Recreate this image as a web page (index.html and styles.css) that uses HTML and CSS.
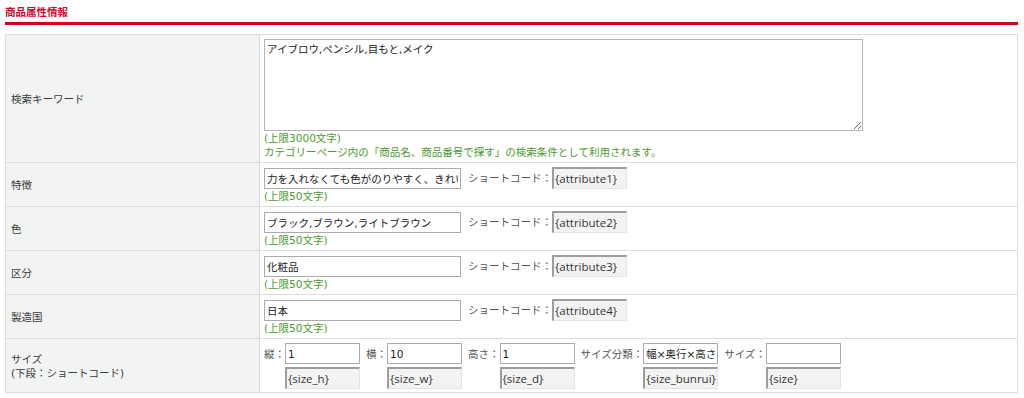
FILE: index.html
```html
<!DOCTYPE html>
<html lang="ja">
<head>
    <meta charset="UTF-8">
    <title>商品属性情報</title>
    <link rel="stylesheet" href="styles.css">
</head>
<body>
    <div class="wrap">
        <h2 class="sec-title">商品属性情報</h2>
        <table class="attr-table">
            <tr>
                <th>検索キーワード</th>
                <td>
                    <textarea class="kw">アイブロウ,ペンシル,目もと,メイク</textarea>
                    <div class="hint">(上限3000文字)</div>
                    <div class="hint">カテゴリーページ内の「商品名、商品番号で探す」の検索条件として利用されます。</div>
                </td>
            </tr>
            <tr>
                <th>特徴</th>
                <td>
                    <div class="line">
                        <input class="txt" type="text" value="力を入れなくても色がのりやすく、きれいに描けます">
                        <span class="sc-label">ショートコード：</span><input class="code" type="text" value="{attribute1}" readonly>
                    </div>
                    <div class="hint">(上限50文字)</div>
                </td>
            </tr>
            <tr>
                <th>色</th>
                <td>
                    <div class="line">
                        <input class="txt" type="text" value="ブラック,ブラウン,ライトブラウン">
                        <span class="sc-label">ショートコード：</span><input class="code" type="text" value="{attribute2}" readonly>
                    </div>
                    <div class="hint">(上限50文字)</div>
                </td>
            </tr>
            <tr>
                <th>区分</th>
                <td>
                    <div class="line">
                        <input class="txt" type="text" value="化粧品">
                        <span class="sc-label">ショートコード：</span><input class="code" type="text" value="{attribute3}" readonly>
                    </div>
                    <div class="hint">(上限50文字)</div>
                </td>
            </tr>
            <tr>
                <th>製造国</th>
                <td>
                    <div class="line">
                        <input class="txt" type="text" value="日本">
                        <span class="sc-label">ショートコード：</span><input class="code" type="text" value="{attribute4}" readonly>
                    </div>
                    <div class="hint">(上限50文字)</div>
                </td>
            </tr>
            <tr>
                <th>サイズ<br>(下段：ショートコード)</th>
                <td class="size-cell">
                    <div class="size-row">
                        <div class="size-item">
                            <span class="s-label">縦：</span><input class="s-in" type="text" value="1">
                            <input class="code s-code" type="text" value="{size_h}" readonly>
                        </div>
                        <div class="size-item">
                            <span class="s-label">横：</span><input class="s-in" type="text" value="10">
                            <input class="code s-code" type="text" value="{size_w}" readonly>
                        </div>
                        <div class="size-item">
                            <span class="s-label">高さ：</span><input class="s-in" type="text" value="1">
                            <input class="code s-code" type="text" value="{size_d}" readonly>
                        </div>
                        <div class="size-item">
                            <span class="s-label">サイズ分類：</span><input class="s-in" type="text" value="幅×奥行×高さ">
                            <input class="code s-code" type="text" value="{size_bunrui}" readonly>
                        </div>
                        <div class="size-item">
                            <span class="s-label">サイズ：</span><input class="s-in" type="text" value="">
                            <input class="code s-code" type="text" value="{size}" readonly>
                        </div>
                    </div>
                </td>
            </tr>
        </table>
    </div>
</body>
</html>
```

FILE: styles.css
```css
body {
    margin: 0;
    background-color: #fff;
    font-family: "DejaVu Sans", "Noto Sans CJK JP", sans-serif;
    font-size: 10.5px;
    color: #333;
}
.wrap {
    padding: 5px 6px 0 5px;
}
.sec-title {
    margin: 0 0 9px 0;
    padding: 0 0 3px 0;
    font-size: 10.5px;
    line-height: 14px;
    color: #c8102e;
    font-weight: bold;
    border-bottom: 3px solid #d0021b;
}
.attr-table {
    width: 100%;
    border-collapse: collapse;
    border: 1px solid #d6d6d6;
}
.attr-table th,
.attr-table td {
    border: 1px solid #dcdcdc;
    line-height: 14px;
    vertical-align: middle;
}
.attr-table th {
    width: 243px;
    padding: 0 5px;
    background-color: #f2f3f3;
    font-weight: normal;
    text-align: left;
    color: #3a3a3a;
}
.attr-table td {
    padding: 4px 4px 3px 4px;
}
.kw {
    display: block;
    width: 599px;
    height: 92px;
    box-sizing: border-box;
    margin: 0;
    padding: 2px 2px;
    border: 1px solid #b5b5b5;
    font-family: inherit;
    font-size: 10.5px;
    line-height: 14px;
    color: #222;
}
.hint {
    color: #4b9a2f;
    line-height: 14px;
}
.line {
    display: flex;
    align-items: center;
}
input {
    box-sizing: border-box;
    margin: 0;
    height: 21px;
    padding: 0 2px;
    border: 1px solid #ababab;
    font-family: inherit;
    font-size: 10.5px;
    color: #222;
    background-color: #fff;
}
.txt {
    width: 197px;
}
.sc-label {
    margin-left: 7px;
    color: #555;
    white-space: nowrap;
}
.code {
    width: 75px;
    height: 22px;
    border-width: 2px 1px 1px 2px;
    border-color: #9d9d9d #e4e4e4 #e4e4e4 #9d9d9d;
    background-color: #f3f3f3;
    color: #333;
    padding: 0 1px;
    font-family: "Open Sans", "Noto Sans CJK JP", sans-serif;
    font-size: 11.5px;
}
.size-cell {
    padding-bottom: 3px;
}
.size-row {
    display: flex;
    gap: 6px;
}
.size-item {
    display: grid;
    grid-template-columns: auto 75px;
    row-gap: 3px;
    align-items: center;
}
.s-label {
    color: #555;
    white-space: nowrap;
}
.s-in {
    width: 75px;
}
.s-code {
    grid-column: 2;
}
```
